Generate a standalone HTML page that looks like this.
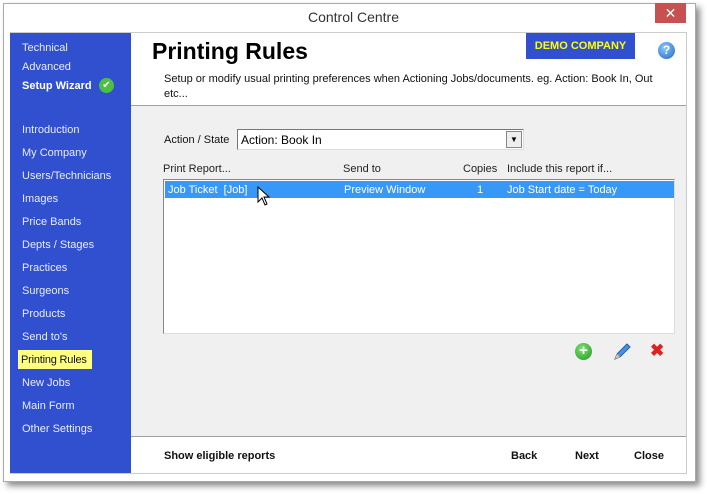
<!DOCTYPE html>
<html><head><meta charset="utf-8"><style>
*{margin:0;padding:0;box-sizing:border-box}
body{width:707px;height:495px;background:#fff;font-family:"Liberation Sans",sans-serif;font-size:11px;position:relative;overflow:hidden}
.a{position:absolute;white-space:nowrap}
.win{left:3px;top:3px;width:693px;height:479px;border:1px solid #aaa;background:#fff;box-shadow:4px 4px 6px rgba(0,0,0,.45)}
.side{left:10px;top:33px;width:121px;height:440px;background:#3050d0}
.side div{position:absolute;left:12px;color:#e8ecff;font-size:11px;white-space:nowrap}
.b{font-weight:bold;font-size:11px;color:#111}
</style></head><body>
<div class="a win"></div>
<div class="a" style="left:0;width:707px;top:9px;text-align:center;font-size:14px;color:#333">Control Centre</div>
<div class="a" style="left:655px;top:3px;width:31px;height:20px;background:#c75050;color:#fff;text-align:center;font-size:14px;line-height:20px">✕</div>
<div class="a" style="left:10px;top:32px;width:677px;height:442px;border:1px solid #ccc"></div>
<div class="a" style="left:131px;top:105px;width:555px;height:332px;background:#f0f0f0;border-top:1px solid #a0a0a0;border-bottom:1px solid #a0a0a0"></div>
<div class="a side">
<div style="top:9px">Technical</div>
<div style="top:28px">Advanced</div>
<div style="top:47px;font-weight:bold;color:#fff">Setup Wizard</div>
<div style="top:45px;left:89px;width:15px;height:15px;border-radius:50%;background:#4cc040;color:#fff;font-size:10px;text-align:center;line-height:15px">✔</div>
<div style="top:91px">Introduction</div>
<div style="top:114px">My Company</div>
<div style="top:137px">Users/Technicians</div>
<div style="top:160px">Images</div>
<div style="top:183px">Price Bands</div>
<div style="top:206px">Depts / Stages</div>
<div style="top:229px">Practices</div>
<div style="top:252px">Surgeons</div>
<div style="top:275px">Products</div>
<div style="top:298px">Send to's</div>
<div style="top:317px;left:8px;width:74px;height:19px;background:#ffff80;color:#111;padding:4px 0 0 3px;letter-spacing:-0.2px">Printing Rules</div>
<div style="top:344px">New Jobs</div>
<div style="top:367px">Main Form</div>
<div style="top:390px">Other Settings</div>
</div>
<div class="a" style="left:152px;top:38px;font-size:23px;font-weight:bold;color:#000">Printing Rules</div>
<div class="a" style="left:526px;top:33px;width:109px;height:26px;background:#3050d0;color:#ffff00;font-weight:bold;font-size:11px;text-align:center;line-height:26px">DEMO COMPANY</div>
<div class="a" style="left:658px;top:42px;width:17px;height:17px;border-radius:50%;background:radial-gradient(circle at 40% 35%,#8cc8ff,#1e66c0);color:#fff;font-weight:bold;font-size:12px;text-align:center;line-height:17px">?</div>
<div class="a" style="left:164px;top:72px;width:500px;line-height:15px;color:#111;white-space:normal">Setup or modify usual printing preferences when Actioning Jobs/documents. eg. Action: Book In, Out etc...</div>
<div class="a" style="left:164px;top:134px;color:#111">Action / State</div>
<div class="a" style="left:237px;top:129px;width:287px;height:21px;background:#fff;border:1px solid #777;border-right-color:#ddd;border-bottom-color:#ddd;padding:3px 3px;font-size:12px">Action: Book In</div>
<div class="a" style="left:506px;top:131px;width:16px;height:17px;background:#eee;border:1px solid #888;font-size:8px;text-align:center;line-height:16px">▼</div>
<div class="a" style="left:163px;top:163px;color:#222">Print Report...</div>
<div class="a" style="left:343px;top:163px;color:#222">Send to</div>
<div class="a" style="left:463px;top:163px;color:#222">Copies</div>
<div class="a" style="left:507px;top:163px;color:#222">Include this report if...</div>
<div class="a" style="left:163px;top:179px;width:512px;height:155px;background:#fff;border:1px solid #888;border-right-color:#ddd;border-bottom-color:#ddd"></div>
<div class="a" style="left:165px;top:181px;width:509px;height:17px;background:#3898f8;color:#fff"></div>
<div class="a" style="left:168px;top:184px;color:#fff">Job Ticket&nbsp; [Job]</div>
<div class="a" style="left:344px;top:184px;color:#fff">Preview Window</div>
<div class="a" style="left:477px;top:184px;color:#fff">1</div>
<div class="a" style="left:507px;top:184px;color:#fff">Job Start date = Today</div>
<svg class="a" style="left:257px;top:186px" width="14" height="22"><path d="M1 1 L1 16 L5 12 L8 19 L10 18 L7 11 L12 11 Z" fill="#fff" stroke="#000" stroke-width="1"/></svg>
<div class="a" style="left:575px;top:343px;width:17px;height:17px;border-radius:50%;background:radial-gradient(circle at 40% 35%,#80e070,#1a9a20);color:#fff;font-weight:bold;font-size:15px;text-align:center;line-height:16px">+</div>
<svg class="a" style="left:612px;top:342px" width="20" height="20"><path d="M3 17 L5 12 L15 2 L18 5 L8 15 Z" fill="#4a90e0" stroke="#2060b0"/><path d="M3 17 L5 12 L8 15Z" fill="#f0c080"/></svg>
<div class="a" style="left:650px;top:341px;color:#e02020;font-size:17px;font-weight:bold">✖</div>
<div class="a b" style="left:164px;top:450px">Show eligible reports</div>
<div class="a b" style="left:511px;top:450px">Back</div>
<div class="a b" style="left:575px;top:450px">Next</div>
<div class="a b" style="left:634px;top:450px">Close</div>
</body></html>
